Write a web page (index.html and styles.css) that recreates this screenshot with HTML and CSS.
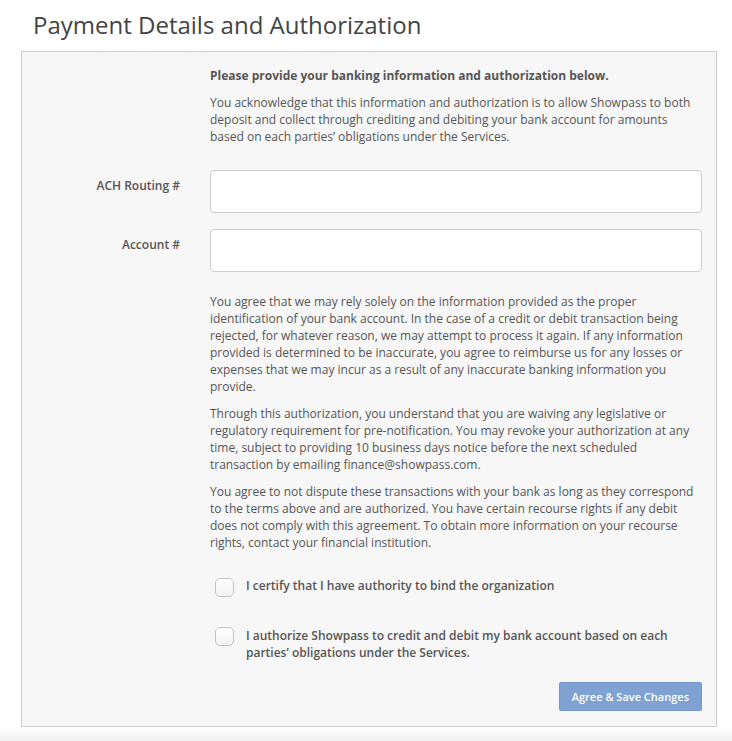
FILE: index.html
```html
<!DOCTYPE html>
<html lang="en">
  <head>
    <meta charset="UTF-8" />
    <meta name="viewport" content="width=device-width, initial-scale=1.0" />
    <title>Payment Details and Authorization</title>
    <link rel="stylesheet" href="styles.css">
  </head>
  <body>
    <div class="page">
      <h1>Payment Details and Authorization</h1>
      <form class="panel">
        <div class="offset intro">
          <p class="lead">Please provide your banking information and authorization below.</p>
          <p>You acknowledge that this information and authorization is to allow Showpass to both deposit and collect through crediting and debiting your bank account for amounts based on each parties’ obligations under the Services.</p>
        </div>

        <div class="form-group">
          <label for="routing">ACH Routing #</label>
          <input type="text" id="routing" />
        </div>
        <div class="form-group">
          <label for="account">Account #</label>
          <input type="text" id="account" />
        </div>

        <div class="offset legal">
          <p>You agree that we may rely solely on the information provided as the proper identification of your bank account. In the case of a credit or debit transaction being rejected, for whatever reason, we may attempt to process it again. If any information provided is determined to be inaccurate, you agree to reimburse us for any losses or expenses that we may incur as a result of any inaccurate banking information you provide.</p>
          <p>Through this authorization, you understand that you are waiving any legislative or regulatory requirement for pre-notification. You may revoke your authorization at any time, subject to providing 10 business days notice before the next scheduled transaction by emailing finance@showpass.com.</p>
          <p>You agree to not dispute these transactions with your bank as long as they correspond to the terms above and are authorized. You have certain recourse rights if any debit does not comply with this agreement. To obtain more information on your recourse rights, contact your financial institution.</p>
        </div>

        <label class="offset check">
          <input type="checkbox" />
          <span>I certify that I have authority to bind the organization</span>
        </label>
        <label class="offset check check-last">
          <input type="checkbox" />
          <span>I authorize Showpass to credit and debit my bank account based on each parties’ obligations under the Services.</span>
        </label>

        <div class="actions">
          <button type="button" class="btn">Agree &amp; Save Changes</button>
        </div>
      </form>
    </div>
  </body>
</html>
```

FILE: styles.css
```css
html,
body {
  margin: 0;
  padding: 0;
}
body {
  font-family: "Open Sans", Arial, sans-serif;
  font-size: 12px;
  line-height: 17px;
  color: #555;
  min-height: 100vh;
  background: linear-gradient(to bottom, #fff 728px, #f1f1f1 741px);
}
.page {
  padding: 8px 15px 0 21px;
}
h1 {
  margin: 0 0 9px 12px;
  font-size: 24px;
  line-height: 34px;
  font-weight: 400;
  color: #444;
}
.panel {
  border: 1px solid #ccc;
  background-color: #f7f7f7;
  padding: 15px 14px 15px 0;
}
.offset {
  margin-left: 188px;
}
p {
  margin: 0 0 10px;
}
p:last-child {
  margin-bottom: 0;
}
.lead {
  font-weight: 700;
}
.intro {
  margin-bottom: 25px;
}
.form-group {
  display: grid;
  grid-template-columns: 158px 1fr;
  column-gap: 30px;
  margin-bottom: 16px;
}
.form-group label {
  text-align: right;
  font-weight: 600;
  padding-top: 7px;
}
.form-group input {
  height: 43px;
  width: 100%;
  box-sizing: border-box;
  border: 1px solid #ccc;
  border-radius: 4px;
  background: #fff;
  padding: 6px 12px;
  font: inherit;
}
.legal {
  margin-top: 21px;
  margin-bottom: 26px;
}
.check {
  display: flex;
  align-items: flex-start;
  gap: 12px;
  font-weight: 600;
  margin-bottom: 30px;
  cursor: pointer;
}
.check input {
  appearance: none;
  flex: none;
  width: 19px;
  height: 19px;
  margin: 0.5px 0 0 5px;
  border: 1px solid #c4c4c4;
  border-radius: 5px;
  background: linear-gradient(to bottom, #fff, #f3f3f3);
  box-sizing: border-box;
}
.check-last {
  margin-bottom: 21px;
}
.actions {
  display: flex;
  justify-content: flex-end;
}
.btn {
  height: 29px;
  padding: 0 12px;
  border: 1px solid #7698c9;
  border-radius: 2px;
  background-color: #80a2d2;
  color: #fff;
  font-family: inherit;
  font-size: 11px;
  font-weight: 600;
}
```
